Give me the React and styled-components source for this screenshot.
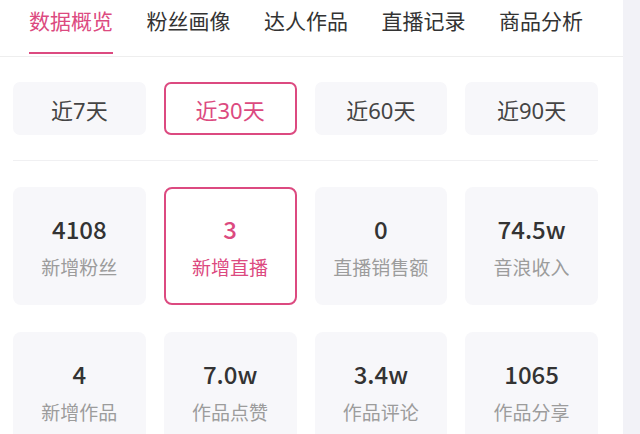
import React, { useState } from "react";
import styled, { createGlobalStyle } from "styled-components";

const pink = "#dc4a80";

const GlobalStyle = createGlobalStyle`
  html, body {
    margin: 0;
    padding: 0;
    background: #f2f2f7;
  }
  body {
    font-family: "Noto Sans CJK SC", "Noto Sans", sans-serif;
    -webkit-font-smoothing: antialiased;
  }
`;

const tabs = ["数据概览", "粉丝画像", "达人作品", "直播记录", "商品分析"];
const ranges = ["近7天", "近30天", "近60天", "近90天"];
const stats = [
  { value: "4108", label: "新增粉丝" },
  { value: "3", label: "新增直播" },
  { value: "0", label: "直播销售额" },
  { value: "74.5w", label: "音浪收入" },
  { value: "4", label: "新增作品" },
  { value: "7.0w", label: "作品点赞" },
  { value: "3.4w", label: "作品评论" },
  { value: "1065", label: "作品分享" },
];

export default function App() {
  const [tab, setTab] = useState(0);
  const [range, setRange] = useState(1);
  const [stat, setStat] = useState(1);

  return (
    <>
      <GlobalStyle />
      <Page>
        <Panel>
          <TabBar>
            {tabs.map((t, i) => (
              <Tab key={t} $active={i === tab} onClick={() => setTab(i)}>
                {t}
              </Tab>
            ))}
          </TabBar>
          <Content>
            <Grid>
              {ranges.map((r, i) => (
                <RangeButton key={r} $active={i === range} onClick={() => setRange(i)}>
                  {r}
                </RangeButton>
              ))}
            </Grid>
            <Divider />
            <StatGrid>
              {stats.map((s, i) => (
                <StatCard key={s.label} $active={i === stat} onClick={() => setStat(i)}>
                  <StatValue $active={i === stat}>{s.value}</StatValue>
                  <StatLabel $active={i === stat}>{s.label}</StatLabel>
                </StatCard>
              ))}
            </StatGrid>
          </Content>
        </Panel>
      </Page>
    </>
  );
}

const Page = styled.div`
  display: flex;
  width: 640px;
  height: 434px;
  overflow: hidden;
  background: #f2f2f7;
`;

const Panel = styled.div`
  width: 623px;
  flex: none;
  background: #ffffff;
`;

const TabBar = styled.div`
  display: flex;
  gap: 33.5px;
  padding: 6px 0 2px 29px;
  border-bottom: 1px solid #eeeeee;
`;

const Tab = styled.div`
  font-size: 21px;
  line-height: 28px;
  padding-bottom: 18px;
  color: ${p => (p.$active ? pink : "#333333")};
  border-bottom: 2px solid ${p => (p.$active ? pink : "transparent")};
  cursor: pointer;
  white-space: nowrap;
`;

const Content = styled.div`
  padding: 25px 25px 0 13px;
`;

const Grid = styled.div`
  display: grid;
  grid-template-columns: repeat(4, 1fr);
  column-gap: 18px;
`;

const RangeButton = styled.div`
  box-sizing: border-box;
  height: 53px;
  display: flex;
  align-items: center;
  justify-content: center;
  border-radius: 7px;
  font-family: "Noto Sans", "Noto Sans CJK SC", sans-serif;
  font-size: 22px;
  color: ${p => (p.$active ? pink : "#444444")};
  background: ${p => (p.$active ? "#ffffff" : "#f7f7fa")};
  border: 2px solid ${p => (p.$active ? pink : "transparent")};
  cursor: pointer;
`;

const Divider = styled.div`
  height: 1px;
  margin: 25px 0 26px;
  background: #f0f0f2;
`;

const StatGrid = styled(Grid)`
  row-gap: 27px;
`;

const StatCard = styled.div`
  box-sizing: border-box;
  height: 118px;
  padding-top: 24px;
  display: flex;
  flex-direction: column;
  align-items: center;
  gap: 10px;
  border-radius: 8px;
  background: ${p => (p.$active ? "#ffffff" : "#f7f7fa")};
  border: 2px solid ${p => (p.$active ? pink : "transparent")};
  cursor: pointer;
`;

const StatValue = styled.div`
  font-size: 24px;
  line-height: 31px;
  font-weight: 500;
  color: ${p => (p.$active ? pink : "#333333")};
`;

const StatLabel = styled.div`
  font-size: 19px;
  line-height: 26px;
  color: ${p => (p.$active ? pink : "#9c9c9c")};
`;
